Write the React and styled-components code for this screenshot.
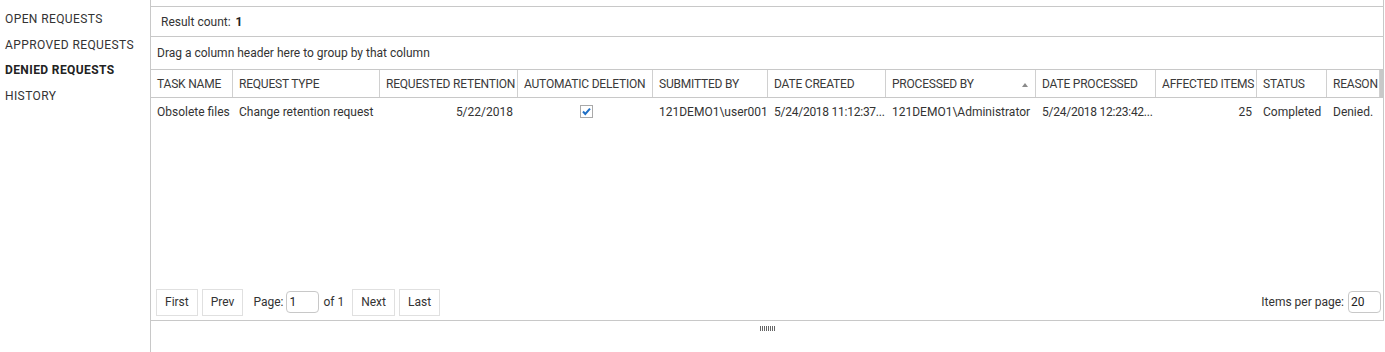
import React from "react";
import styled, { createGlobalStyle } from "styled-components";

const Global = createGlobalStyle`
  html, body { margin: 0; padding: 0; background: #fff; }
  body {
    font-family: "Segoe UI", Roboto, "Open Sans", sans-serif;
    font-size: 12px;
    color: #333;
  }
  * { box-sizing: border-box; }
`;

const Page = styled.div`
  display: flex;
  width: 1385px;
  height: 352px;
  overflow: hidden;
`;

const Sidebar = styled.nav`
  width: 151px;
  flex: none;
  border-right: 1px solid #c8c8c8;
  padding-top: 7px;
`;

const NavItem = styled.div`
  height: 25.5px;
  line-height: 25.5px;
  padding-left: 5px;
  white-space: nowrap;
  letter-spacing: 0.4px;
  color: ${(p) => (p.$active ? "#222" : "#333")};
  font-weight: ${(p) => (p.$active ? 700 : 400)};
`;

const Main = styled.main`
  flex: 1;
  display: flex;
  flex-direction: column;
  padding-right: 1px;
`;

const GridBox = styled.section`
  height: 321px;
  display: flex;
  flex-direction: column;
  padding-top: 6px;
  border-right: 1px solid #c8c8c8;
  border-bottom: 1px solid #c8c8c8;
`;

const Toolbar = styled.div`
  height: 31px;
  display: flex;
  align-items: center;
  padding-left: 10px;
  border-top: 1px solid #c8c8c8;
  border-bottom: 1px solid #c8c8c8;
  b { margin-left: 5px; font-weight: 700; color: #222; }
`;

const GroupPanel = styled.div`
  height: 33px;
  display: flex;
  align-items: center;
  padding-left: 6px;
  border-bottom: 1px solid #c8c8c8;
`;

const COLS = "82px 147px 138px 135px 115px 118px 150px 120px 101px 70px 53px 3px";

const HeaderRow = styled.div`
  display: grid;
  grid-template-columns: ${COLS};
  height: 28px;
  border-bottom: 1px solid #c8c8c8;
`;

const HeaderCell = styled.div`
  position: relative;
  display: flex;
  align-items: center;
  padding-left: 6px;
  border-right: 1px solid #d0d0d0;
  white-space: nowrap;
  overflow: hidden;
  text-transform: uppercase;
  letter-spacing: -0.2px;
  color: #3a3a3a;
`;

const ScrollGap = styled.div`
  background: #c8c8c8;
`;

const SortArrow = styled.span`
  position: absolute;
  right: 7px;
  top: 13px;
  width: 0;
  height: 0;
  border-left: 3px solid transparent;
  border-right: 3px solid transparent;
  border-bottom: 4px solid #8a8a8a;
`;

const Body = styled.div`
  flex: 1;
`;

const DataRow = styled.div`
  display: grid;
  grid-template-columns: ${COLS};
  height: 27px;
`;

const Cell = styled.div`
  display: flex;
  align-items: center;
  justify-content: ${(p) =>
    p.$align === "right" ? "flex-end" : p.$align === "center" ? "center" : "flex-start"};
  padding: 0 5px 0 6px;
  white-space: nowrap;
  overflow: hidden;
  letter-spacing: ${(p) => (p.$tight ? "-0.25px" : "0")};
  color: #333;
`;

const Pager = styled.div`
  height: 36px;
  display: flex;
  align-items: center;
  justify-content: space-between;
  padding: 0 2px 0 5px;
`;

const PagerGroup = styled.div`
  display: flex;
  align-items: center;
  gap: 4px;
`;

const PagerButton = styled.button`
  height: 27px;
  padding: 0 8px;
  border: 1px solid #e0e0e0;
  background: #fff;
  font: inherit;
  color: #333;
  cursor: pointer;
`;

const Label = styled.span`
  margin: ${(p) => p.$margin || "0"};
  white-space: nowrap;
`;

const PageInput = styled.input`
  width: 33px;
  height: 22px;
  border: 1px solid #c8c8c8;
  border-radius: 4px;
  padding: 0 2px;
  font: inherit;
  color: #222;
  outline: none;
`;

const Splitter = styled.div`
  flex: 1;
  display: flex;
  justify-content: center;
  padding-top: 5px;
`;

const Grip = styled.div`
  width: 15px;
  height: 5px;
  background: repeating-linear-gradient(
    to right,
    #666 0px,
    #666 1px,
    transparent 1px,
    transparent 2px
  );
`;

const Check = () => (
  <svg width="13" height="13" viewBox="0 0 13 13">
    <rect x="0.5" y="0.5" width="12" height="12" fill="#fff" stroke="#a9a9a9" />
    <path d="M3 6.5 L5.3 9 L10 3.6" fill="none" stroke="#1f6fc5" strokeWidth="2" />
  </svg>
);

const columns = [
  "Task name",
  "Request type",
  "Requested retention",
  "Automatic deletion",
  "Submitted by",
  "Date created",
  "Processed by",
  "Date processed",
  "Affected items",
  "Status",
  "Reason",
];

const row = [
  { v: "Obsolete files" },
  { v: "Change retention request" },
  { v: "5/22/2018", align: "right" },
  { v: <Check />, align: "center" },
  { v: "121DEMO1\\user001" },
  { v: "5/24/2018 11:12:37...", tight: true },
  { v: "121DEMO1\\Administrator" },
  { v: "5/24/2018 12:23:42...", tight: true },
  { v: "25", align: "right" },
  { v: "Completed" },
  { v: "Denied." },
];

const nav = [
  { label: "OPEN REQUESTS" },
  { label: "APPROVED REQUESTS" },
  { label: "DENIED REQUESTS", active: true },
  { label: "HISTORY" },
];

export default function App() {
  return (
    <>
      <Global />
      <Page>
        <Sidebar>
          {nav.map((n) => (
            <NavItem key={n.label} $active={n.active}>
              {n.label}
            </NavItem>
          ))}
        </Sidebar>
        <Main>
          <GridBox>
            <Toolbar>
              Result count:<b>1</b>
            </Toolbar>
            <GroupPanel>Drag a column header here to group by that column</GroupPanel>
            <HeaderRow>
              {columns.map((c) => (
                <HeaderCell key={c}>
                  {c}
                  {c === "Processed by" && <SortArrow />}
                </HeaderCell>
              ))}
              <ScrollGap />
            </HeaderRow>
            <Body>
              <DataRow>
                {row.map((c, i) => (
                  <Cell key={i} $align={c.align} $tight={c.tight}>
                    {c.v}
                  </Cell>
                ))}
              </DataRow>
            </Body>
            <Pager>
              <PagerGroup>
                <PagerButton>First</PagerButton>
                <PagerButton>Prev</PagerButton>
                <Label $margin="0 -1px 0 6px">Page:</Label>
                <PageInput defaultValue="1" />
                <Label $margin="0 4px 0 0">of 1</Label>
                <PagerButton>Next</PagerButton>
                <PagerButton>Last</PagerButton>
              </PagerGroup>
              <PagerGroup>
                <Label>Items per page:</Label>
                <PageInput defaultValue="20" />
              </PagerGroup>
            </Pager>
          </GridBox>
          <Splitter>
            <Grip />
          </Splitter>
        </Main>
      </Page>
    </>
  );
}
